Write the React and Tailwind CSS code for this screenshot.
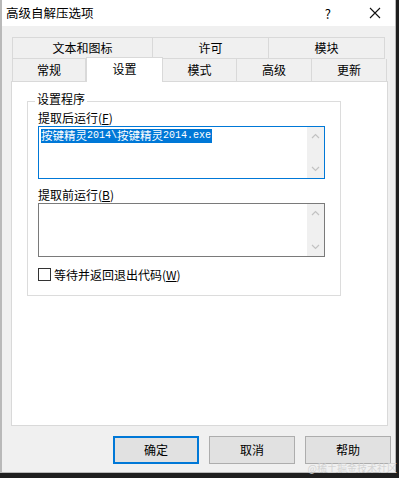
import React from "react";

const ui = { fontFamily: '"Noto Sans CJK SC", "Microsoft YaHei", sans-serif' };

function Chevron({ up }) {
  return (
    <svg width="9" height="6" viewBox="0 0 9 6" fill="none">
      <path d={up ? "M1 5 L4.5 1.5 L8 5" : "M1 1 L4.5 4.5 L8 1"} stroke="#c2c2c2" strokeWidth="1.2" />
    </svg>
  );
}

function ScrollBar() {
  return (
    <div className="ml-auto w-[17px] h-full bg-[#f0f0f0] flex flex-col items-center justify-between py-[6px]">
      <Chevron up />
      <Chevron />
    </div>
  );
}

function Cjk({ children }) {
  return <span className="text-[11.5px]" style={ui}>{children}</span>;
}
function Mono({ children }) {
  return <span className="text-[10px]" style={{ fontFamily: '"Liberation Mono", monospace' }}>{children}</span>;
}

export default function App() {
  return (
    <div className="w-[399px] h-[478px] bg-[#1f1f1f] overflow-hidden relative" style={ui}>
      <div className="w-[396px] h-[473px] bg-[#f0f0f0] border-l-2 border-r border-b border-[#b9b9b9] flex flex-col text-[12px] text-black">
        {/* title bar */}
        <div className="h-[26px] bg-white flex items-center shrink-0">
          <span className="ml-[4px] text-[12.5px] leading-none">高级自解压选项</span>
          <span className="ml-auto mr-[38px] text-[13px] leading-none">?</span>
          <svg className="mr-[14px]" width="12" height="12" viewBox="0 0 12 12">
            <path d="M1 1 L11 11 M11 1 L1 11" stroke="#111" strokeWidth="1.1" />
          </svg>
        </div>

        {/* tabs */}
        <div className="mt-[11px] ml-[10px] flex flex-col">
          <div className="flex h-[22px] w-[373px]">
            <div className="w-[141px] border border-[#d9d9d9] flex items-center justify-center">文本和图标</div>
            <div className="w-[116px] border-y border-r border-[#d9d9d9] flex items-center justify-center">许可</div>
            <div className="w-[116px] border-y border-r border-[#d9d9d9] flex items-center justify-center">模块</div>
          </div>
          <div className="flex h-[22px] w-[375px] items-end relative z-10">
            <div className="w-[74px] h-[22px] border-x border-[#d9d9d9] flex items-center justify-center">常规</div>
            <div className="w-[77px] h-[25px] -mb-[1px] bg-white border-x border-t border-[#d9d9d9] flex items-start pt-[2px] justify-center">设置</div>
            <div className="w-[74px] h-[22px] border-r border-[#d9d9d9] flex items-center justify-center">模式</div>
            <div className="w-[75px] h-[22px] border-r border-[#d9d9d9] flex items-center justify-center">高级</div>
            <div className="w-[75px] h-[22px] border-r border-[#d9d9d9] flex items-center justify-center">更新</div>
          </div>
        </div>

        {/* panel */}
        <div className="ml-[9px] w-[377px] h-[345px] bg-white border border-[#d9d9d9] shrink-0">
          <div className="ml-[15px] mt-[19px] w-[314px] h-[195px] border border-[#dcdcdc] relative">
            <span className="absolute -top-[9px] left-[7px] bg-white px-[2px] leading-none">设置程序</span>
            <div className="pl-[10px] pt-[8px] flex flex-col">
              <div className="leading-[16px]">提取后运行(<span className="underline">F</span>)</div>
              <div className="w-[287px] h-[53px] border border-[#0078d7] flex">
                <div className="pl-[2px] pt-[2px]">
                  <div className="bg-[#0078d7] text-white h-[14px] flex items-center leading-none pr-[1px]">
                    <Cjk>按键精灵</Cjk><Mono>2014\</Mono><Cjk>按键精灵</Cjk><Mono>2014.exe</Mono>
                  </div>
                </div>
                <ScrollBar />
              </div>
              <div className="mt-[8px] leading-[16px]">提取前运行(<span className="underline">B</span>)</div>
              <div className="w-[287px] h-[54px] border border-[#7a7a7a] flex">
                <ScrollBar />
              </div>
              <div className="mt-[11px] flex items-center">
                <div className="w-[13px] h-[13px] border border-[#333] bg-white"></div>
                <span className="ml-[3px] leading-none">等待并返回退出代码(<span className="underline">W</span>)</span>
              </div>
            </div>
          </div>
        </div>

        {/* buttons */}
        <div className="mt-[10px] flex pl-[111px] gap-[10px]">
          <div className="w-[86px] h-[28px] bg-[#e1e1e1] border-2 border-[#0078d7] flex items-center justify-center">确定</div>
          <div className="w-[86px] h-[28px] bg-[#e1e1e1] border border-[#adadad] flex items-center justify-center">取消</div>
          <div className="w-[86px] h-[28px] bg-[#e1e1e1] border border-[#adadad] flex items-center justify-center">帮助</div>
        </div>
      </div>
      <span className="absolute right-[2px] bottom-[5px] text-[10px] text-[#d4d4d4] leading-none">@稀土掘金技术社区</span>
    </div>
  );
}
